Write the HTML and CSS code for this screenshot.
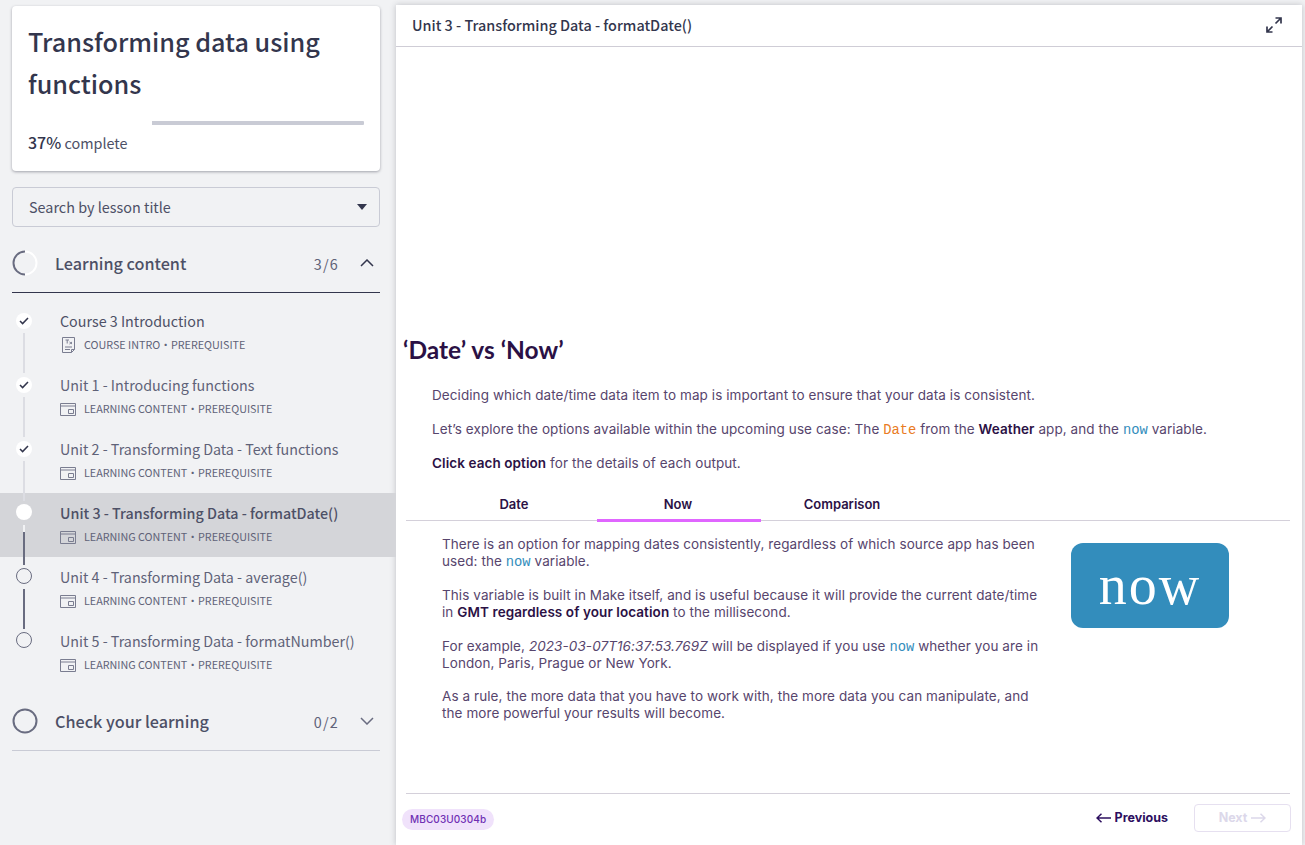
FILE: index.html
```html
<!DOCTYPE html>
<html lang="en">
<head>
<meta charset="utf-8">
<title>Transforming data using functions</title>
<link rel="stylesheet" href="styles.css">
</head>
<body>
<div class="app">
  <aside class="sidebar">
    <section class="course-card">
      <h1 class="course-title">Transforming data using functions</h1>
      <div class="progress"><div class="progress-fill"></div></div>
      <p class="progress-text"><b>37%</b> complete</p>
    </section>
    <div class="search"><span>Search by lesson title</span><i class="caret"></i></div>

    <div class="section-head open">
      <svg class="ring" viewBox="0 0 26 26"><circle cx="13" cy="13" r="11.5" fill="none" stroke="#fff" stroke-width="2"/><path d="M13 1.5A11.5 11.5 0 1 0 13 24.5" fill="none" stroke="#696c80" stroke-width="2"/></svg>
      <span class="section-name">Learning content</span>
      <span class="section-count">3/6</span>
      <svg class="chev" viewBox="0 0 14 8"><path d="M1 7l6-6 6 6" fill="none" stroke="#33364d" stroke-width="1.5"/></svg>
    </div>

    <ul class="lessons">
      <li class="lesson done first">
        <span class="dot"><svg viewBox="0 0 10 8"><path d="M1 4l2.6 2.6L9 1" fill="none" stroke="#33364d" stroke-width="1.5"/></svg></span>
        <i class="line"></i>
        <div class="lesson-title">Course 3 Introduction</div>
        <div class="lesson-meta">
          <svg class="doc-icon" viewBox="0 0 13 16"><path d="M.5.5h12v12l-3 3h-9zM12.500 12.500h-3v3M3 10h7M3 12.500h5M3.500 3h3.500M5.200 3v3.500M7.500 5l2.500 2M10 5L7.500 7" fill="none" stroke="#7a7d90"/></svg>
          <span>COURSE INTRO</span><span class="sep">·</span><span>PREREQUISITE</span>
        </div>
      </li>
      <li class="lesson done">
        <span class="dot"><svg viewBox="0 0 10 8"><path d="M1 4l2.600 2.600L9 1" fill="none" stroke="#33364d" stroke-width="1.500"/></svg></span>
        <i class="line"></i>
        <div class="lesson-title">Unit 1 - Introducing functions</div>
        <div class="lesson-meta">
          <svg class="win-icon" viewBox="0 0 16 13"><path d="M.5.5h15v12H.5zM.5 3h15M8.500 6.500h5v4h-5z" fill="none" stroke="#7a7d90"/></svg>
          <span>LEARNING CONTENT</span><span class="sep">·</span><span>PREREQUISITE</span>
        </div>
      </li>
      <li class="lesson done">
        <span class="dot"><svg viewBox="0 0 10 8"><path d="M1 4l2.600 2.600L9 1" fill="none" stroke="#33364d" stroke-width="1.500"/></svg></span>
        <i class="line"></i>
        <div class="lesson-title">Unit 2 - Transforming Data - Text functions</div>
        <div class="lesson-meta">
          <svg class="win-icon" viewBox="0 0 16 13"><path d="M.5.5h15v12H.5zM.5 3h15M8.500 6.500h5v4h-5z" fill="none" stroke="#7a7d90"/></svg>
          <span>LEARNING CONTENT</span><span class="sep">·</span><span>PREREQUISITE</span>
        </div>
      </li>
      <li class="lesson current">
        <span class="dot"></span>
        <i class="line"></i>
        <div class="lesson-title">Unit 3 - Transforming Data - formatDate()</div>
        <div class="lesson-meta">
          <svg class="win-icon" viewBox="0 0 16 13"><path d="M.5.5h15v12H.5zM.5 3h15M8.500 6.500h5v4h-5z" fill="none" stroke="#7a7d90"/></svg>
          <span>LEARNING CONTENT</span><span class="sep">·</span><span>PREREQUISITE</span>
        </div>
      </li>
      <li class="lesson todo">
        <span class="dot"></span>
        <i class="line"></i>
        <div class="lesson-title">Unit 4 - Transforming Data - average()</div>
        <div class="lesson-meta">
          <svg class="win-icon" viewBox="0 0 16 13"><path d="M.5.5h15v12H.5zM.5 3h15M8.500 6.500h5v4h-5z" fill="none" stroke="#7a7d90"/></svg>
          <span>LEARNING CONTENT</span><span class="sep">·</span><span>PREREQUISITE</span>
        </div>
      </li>
      <li class="lesson todo last">
        <span class="dot"></span>
        <div class="lesson-title">Unit 5 - Transforming Data - formatNumber()</div>
        <div class="lesson-meta">
          <svg class="win-icon" viewBox="0 0 16 13"><path d="M.5.5h15v12H.5zM.5 3h15M8.500 6.500h5v4h-5z" fill="none" stroke="#7a7d90"/></svg>
          <span>LEARNING CONTENT</span><span class="sep">·</span><span>PREREQUISITE</span>
        </div>
      </li>
    </ul>

    <div class="section-head closed">
      <svg class="ring" viewBox="0 0 26 26"><circle cx="13" cy="13" r="11.500" fill="none" stroke="#696c80" stroke-width="2"/></svg>
      <span class="section-name">Check your learning</span>
      <span class="section-count">0/2</span>
      <svg class="chev" viewBox="0 0 14 8"><path d="M1 1l6 6 6-6" fill="none" stroke="#696c80" stroke-width="1.500"/></svg>
    </div>
  </aside>

  <main class="viewer">
    <header class="viewer-head">
      <h2 class="viewer-title">Unit 3 - Transforming Data - formatDate()</h2>
      <svg class="expand" viewBox="0 0 16 16"><path d="M9.500 1h5.500v5.500M15 1L9.500 6.500M6.500 15H1V9.500M1 15l5.500-5.500" fill="none" stroke="#33364d" stroke-width="1.700"/></svg>
    </header>

    <div class="content">
      <h3 class="slide-heading">‘Date’ vs ‘Now’</h3>
      <div class="intro">
        <p>Deciding which date/time data item to map is important to ensure that your data is consistent.</p>
        <p>Let’s explore the options available within the upcoming use case: The <code class="orange">Date</code> from the <strong>Weather</strong> app, and the <code class="blue">now</code> variable.</p>
        <p><strong>Click each option</strong> for the details of each output.</p>
      </div>
      <div class="tabs">
        <div class="tab">Date</div>
        <div class="tab active">Now</div>
        <div class="tab">Comparison</div>
      </div>
      <div class="panel">
        <div class="panel-text">
          <p>There is an option for mapping dates consistently, regardless of which source app has been used: the <code class="blue">now</code> variable.</p>
          <p>This variable is built in Make itself, and is useful because it will provide the current date/time in <strong>GMT regardless of your location</strong> to the millisecond.</p>
          <p>For example, <em>2023-03-07T16:37:53.769Z</em> will be displayed if you use <code class="blue">now</code> whether you are in London, Paris, Prague or New York.</p>
          <p>As a rule, the more data that you have to work with, the more data you can manipulate, and the more powerful your results will become.</p>
        </div>
        <div class="now-badge"><span>now</span></div>
      </div>
    </div>

    <footer class="viewer-foot">
      <span class="code-pill">MBC03U0304b</span>
      <div class="nav">
        <button class="btn-prev"><svg class="arrow" viewBox="0 0 15 10"><path d="M15 5H1M5.500.8L1 5l4.500 4.200" fill="none" stroke="currentColor" stroke-width="1.500"/></svg>Previous</button>
        <button class="btn-next">Next<svg class="arrow" viewBox="0 0 15 10"><path d="M0 5h14M9.500.8L14 5 9.500 9.200" fill="none" stroke="currentColor" stroke-width="1.500"/></svg></button>
      </div>
    </footer>
  </main>
</div>
</body>
</html>
```
FILE: styles.css
```css
* { box-sizing: border-box; }
html, body { margin: 0; height: 100%; }
body {
  background: #f1f2f4;
  font-family: "Noto Sans CJK SC", "Noto Sans", sans-serif;
  color: #33364d;
  overflow: hidden;
}
p, h1, h2, h3, ul { margin: 0; padding: 0; }
ul { list-style: none; }

.app { display: flex; height: 845px; width: 1305px; }

/* Sidebar */
.sidebar { width: 396px; flex: none; padding: 6px 0 0 12px; }
.sidebar > .course-card, .sidebar > .search, .sidebar > .section-head { width: 368px; }

.course-card {
  height: 165px;
  background: #fff;
  border-radius: 4px;
  box-shadow: 0 1px 3px rgba(40, 42, 60, .4);
  padding: 14px 16px 0;
}
.course-title { font-size: 25.2px; line-height: 42px; font-weight: 500; color: #33364d; }
.progress { height: 4px; margin-top: 17px; background: #c9cbd5; border-radius: 1px; }
.progress-fill { height: 4px; width: 37%; background: #fff; }
.progress-text { font-size: 14.4px; line-height: 24px; margin-top: 5px; color: #4d5066; }
.progress-text b { font-weight: 500; font-size: 16px; color: #33364d; }

.search {
  height: 40px;
  margin-top: 16px;
  border: 1px solid #c9cbd5;
  border-radius: 4px;
  display: flex;
  align-items: center;
  justify-content: space-between;
  padding: 0 12px 2px 16px;
  font-size: 14.4px;
  color: #4d5066;
}
.caret { width: 0; height: 0; border-left: 5px solid transparent; border-right: 5px solid transparent; border-top: 6px solid #33364d; margin-top: 2px; }

.section-head { display: flex; align-items: center; height: 59px; border-bottom: 1px solid #c9cbd5; }
.section-head.open { height: 56px; margin-top: 10px; padding-bottom: 3px; border-bottom-color: #33364d; }
.ring { width: 26px; height: 26px; flex: none; }
.section-name { margin-left: 17px; font-size: 16.2px; font-weight: 500; color: #4d5066; flex: 1; }
.section-count { font-size: 14.4px; letter-spacing: 1.2px; color: #5f6278; margin-right: 21px; }
.chev { width: 14px; height: 8px; margin-right: 6px; }

.lessons { margin-top: 8px; padding-bottom: 7px; }
.lesson { position: relative; height: 64px; padding: 8px 0 0 60px; margin-left: -12px; }
.dot {
  position: absolute; left: 16px; top: 12px;
  width: 16px; height: 16px; border-radius: 50%;
  background: #fff;
  display: flex; align-items: center; justify-content: center;
}
.dot svg { width: 10px; height: 8px; }
.line { position: absolute; left: 23px; top: 32px; width: 2px; height: 40px; background: #dcdde3; z-index: 1; }
.todo .dot { background: transparent; border: 1px solid #696c80; }
.current .dot, .todo .dot { top: 11px; }
.todo .line { background: #696c80; }
.current { background: #d4d5d9; }
.current .line { background: linear-gradient(#f1f2f4 0 7px, #696c80 7px); }
.lesson-title { font-size: 14.3px; line-height: 24px; color: #5f6278; white-space: nowrap; }
.first .lesson-title { color: #4d5066; }
.current .lesson-title { font-weight: 500; color: #4d5066; }
.lesson-meta { display: flex; align-items: center; font-size: 10.75px; line-height: 18px; margin-top: 3px; color: #5f6278; }
.win-icon { width: 16px; height: 13px; margin-right: 8px; flex: none; }
.doc-icon { width: 13px; height: 16px; margin: 0 9px 0 2px; flex: none; }

/* Viewer */
.viewer {
  width: 906px; flex: none;
  margin-top: 5px;
  height: 840px;
  background: #fff;
  box-shadow: 0 0 6px rgba(40, 42, 60, .25);
  display: flex; flex-direction: column;
}
.viewer-head {
  height: 42px; flex: none;
  border-bottom: 1px solid #cfcdd6;
  display: flex; align-items: center; justify-content: space-between;
  padding: 0 20px 2px 16px;
}
.viewer-title { font-size: 14.4px; font-weight: 500; color: #33364d; }
.expand { width: 16px; height: 16px; }

.content { flex: 1; padding: 0 12px 0 7px; font-family: Inter, sans-serif; font-size: 13.5px; letter-spacing: .08px; line-height: 17px; color: #57456d; }
.slide-heading { margin-top: 288px; font-family: Lato, sans-serif; font-size: 24.5px; line-height: 30px; font-weight: 700; letter-spacing: 0; color: #2b1145; }
.intro { padding: 22px 0 0 29px; }
.intro p { margin-bottom: 17px; }
.content strong { font-weight: 600; color: #2b1145; }
.content code { font-family: "Liberation Mono", monospace; font-size: 13.8px; line-height: 1; letter-spacing: 0; }
.orange { color: #e97b24; }
.blue { color: #338dbc; }

.tabs { display: flex; margin: 9px 0 0 3px; padding-left: 27px; border-bottom: 1px solid #d4d0da; height: 32px; }
.tab { width: 164px; padding-right: 2px; text-align: center; font-size: 13px; font-weight: 600; color: #2b1145; line-height: 30px; letter-spacing: 0; }
.tab.active { border-bottom: 3px solid #e066ff; height: 33px; }

.panel { display: flex; padding: 15px 0 0 39px; }
.panel-text { width: 600px; flex: none; }
.panel-text p { margin-bottom: 17px; }
.panel-text p:nth-child(3) { margin-bottom: 16px; }
.now-badge {
  width: 158px; height: 85px; flex: none;
  margin: 7px 0 0 29px;
  background: #338dbc; border-radius: 12px;
  display: flex; align-items: center; justify-content: center;
  font-family: "Liberation Serif", serif; font-size: 56px; color: #fff; letter-spacing: 2px;
}

.viewer-foot {
  flex: none; height: 52px;
  margin: 0 12px 0 10px;
  border-top: 1px solid #d4d0da;
  display: flex; align-items: center; justify-content: space-between;
}
.code-pill { margin-left: -4px; background: #f0e2fb; color: #6f2fb3; font-family: Inter, sans-serif; font-size: 10px; padding: 0 8px; line-height: 21px; border-radius: 11px; font-weight: 500; letter-spacing: .1px; }
.nav { display: flex; align-items: center; margin: -4px -1px 0 0; }
.btn-prev, .btn-next { display: flex; align-items: center; justify-content: center; gap: 4px; font-family: Inter, sans-serif; font-size: 12.5px; font-weight: 700; background: none; }
.btn-prev { border: 0; color: #2d0f5f; padding: 0; margin-right: 26px; }
.btn-next { width: 97px; height: 28px; border: 1px solid #e6e0f0; border-radius: 4px; color: #dcd8ea; padding: 0; }
.arrow { width: 15px; height: 10px; flex: none; }
```
